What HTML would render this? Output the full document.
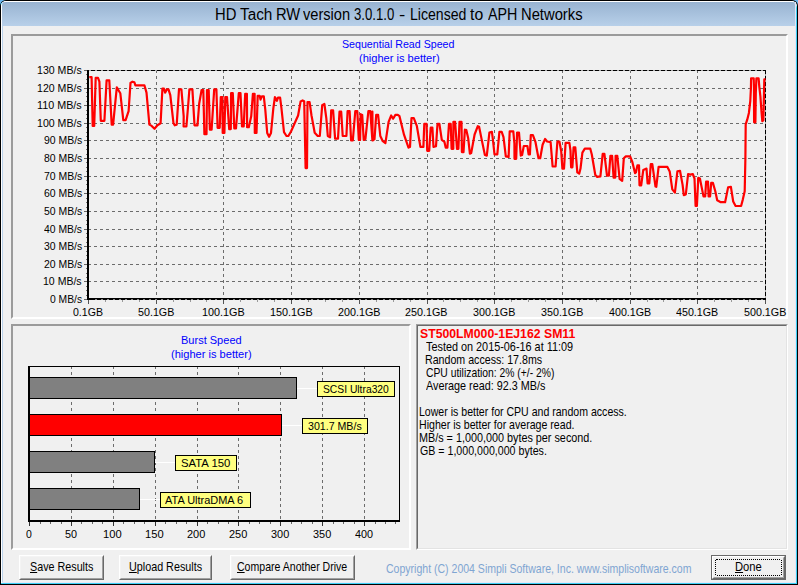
<!DOCTYPE html>
<html><head><meta charset="utf-8"><title>HD Tach RW version 3.0.1.0 - Licensed to APH Networks</title>
<style>
html,body{margin:0;padding:0;background:#6ab7ef;}
body{width:798px;height:585px;overflow:hidden;position:relative;font-family:"Liberation Sans",Arial,sans-serif;}
#win{position:absolute;left:0;top:0;width:798px;height:585px;background:#000;overflow:hidden;border-radius:6px 6px 0 0;}
#f1{position:absolute;left:1px;top:1px;width:796px;height:583px;background:#fff;border-radius:5px 5px 0 0;}
#f1b{position:absolute;left:1px;top:3px;width:796px;height:581px;background:#3dd0f5;border-radius:0 5px 0 0;}
#f1c{position:absolute;left:1px;top:1px;width:795px;height:582px;background:#fff;border-radius:5px 5px 0 0;}
#f2{position:absolute;left:2px;top:2px;width:794px;height:581px;background:#e4e6f6;}
#f2b{position:absolute;left:2px;top:2px;width:793px;height:580px;background:#b9d1ea;}
#title{position:absolute;left:2px;top:2px;width:793px;height:24px;background:linear-gradient(#98b3d1,#b8d0e9);border-radius:4px 4px 0 0;}
#client{position:absolute;left:3px;top:26px;width:792px;height:556px;background:#f0f0f0;}
.panel{position:absolute;box-sizing:border-box;border-style:solid;border-width:2px;border-color:#9b9b9b #fff #fff #9b9b9b;background:#f0f0f0;}
.sunk{position:absolute;box-sizing:border-box;border:1px solid;border-color:#a0a0a0 #fff #fff #a0a0a0;}
.sunk>div{position:absolute;left:0;top:0;right:0;bottom:0;border:1px solid;border-color:#696969 #e3e3e3 #e3e3e3 #696969;}
.btn{position:absolute;box-sizing:border-box;height:25px;top:555px;border:1px solid;border-color:#fff #696969 #696969 #fff;background:#f0f0f0;}
.btn>i{position:absolute;left:0;top:0;right:0;bottom:0;border:1px solid;border-color:#f4f4f4 #a0a0a0 #a0a0a0 #f4f4f4;}
.btn.def{border-color:#696969;}
.btn.def>i{border-color:#fff #696969 #696969 #fff;}
.btn.def>b{position:absolute;left:1px;top:1px;right:1px;bottom:1px;border:1px solid;border-color:#f0f0f0 #a0a0a0 #a0a0a0 #f0f0f0;}
.t{position:absolute;white-space:pre;line-height:20px;height:20px;transform-origin:0 50%;color:#000;font-weight:400;font-style:normal;font-family:"Liberation Sans",Arial,sans-serif;}
.t u{text-decoration:underline;text-underline-offset:1px;}
svg{position:absolute;left:0;top:0;overflow:visible;}
.g{stroke:#6c6c6c;stroke-width:1;stroke-dasharray:3 3;}
</style></head><body>
<div id="win">
<div id="f1"></div><div id="f1b"></div><div id="f1c"></div><div id="f2"></div><div id="f2b"></div>
<div id="title">
<span class="t" style="left:212.84px;top:2.66px;font-size:16px;transform:scaleX(0.9247)">HD</span>
<span class="t" style="left:237.86px;top:2.66px;font-size:16px;transform:scaleX(0.9587)">Tach</span>
<span class="t" style="left:273.85px;top:2.66px;font-size:16px;transform:scaleX(0.9182)">RW</span>
<span class="t" style="left:301.20px;top:2.66px;font-size:16px;transform:scaleX(0.9136)">version</span>
<span class="t" style="left:352.09px;top:2.66px;font-size:16px;transform:scaleX(0.8224)">3.0.1.0</span>
<span class="t" style="left:397.41px;top:2.66px;font-size:16px;transform:scaleX(1.1765)">-</span>
<span class="t" style="left:407.60px;top:2.66px;font-size:16px;transform:scaleX(0.8805)">Licensed</span>
<span class="t" style="left:468.20px;top:2.66px;font-size:16px;transform:scaleX(0.9846)">to</span>
<span class="t" style="left:486.10px;top:2.66px;font-size:16px;transform:scaleX(0.8926)">APH</span>
<span class="t" style="left:519.45px;top:2.66px;font-size:16px;transform:scaleX(0.9225)">Networks</span>
</div>
<div id="client"></div>
<div class="panel" id="seqpanel" style="left:11px;top:34px;width:777px;height:285px">
<svg width="798" height="585" viewBox="0 0 798 585" shape-rendering="crispEdges" style="left:-13px;top:-36px">
<line x1="88" y1="299.5" x2="765" y2="299.5" class="g"/>
<line x1="88" y1="281.5" x2="765" y2="281.5" class="g"/>
<line x1="88" y1="264.5" x2="765" y2="264.5" class="g"/>
<line x1="88" y1="246.5" x2="765" y2="246.5" class="g"/>
<line x1="88" y1="229.5" x2="765" y2="229.5" class="g"/>
<line x1="88" y1="211.5" x2="765" y2="211.5" class="g"/>
<line x1="88" y1="193.5" x2="765" y2="193.5" class="g"/>
<line x1="88" y1="176.5" x2="765" y2="176.5" class="g"/>
<line x1="88" y1="158.5" x2="765" y2="158.5" class="g"/>
<line x1="88" y1="140.5" x2="765" y2="140.5" class="g"/>
<line x1="88" y1="123.5" x2="765" y2="123.5" class="g"/>
<line x1="88" y1="105.5" x2="765" y2="105.5" class="g"/>
<line x1="88" y1="88.5" x2="765" y2="88.5" class="g"/>
<line x1="156.5" y1="70" x2="156.5" y2="298" class="g"/>
<line x1="223.5" y1="70" x2="223.5" y2="298" class="g"/>
<line x1="291.5" y1="70" x2="291.5" y2="298" class="g"/>
<line x1="359.5" y1="70" x2="359.5" y2="298" class="g"/>
<line x1="427.5" y1="70" x2="427.5" y2="298" class="g"/>
<line x1="494.5" y1="70" x2="494.5" y2="298" class="g"/>
<line x1="562.5" y1="70" x2="562.5" y2="298" class="g"/>
<line x1="630.5" y1="70" x2="630.5" y2="298" class="g"/>
<line x1="697.5" y1="70" x2="697.5" y2="298" class="g"/>
<line x1="89" y1="70.5" x2="766" y2="70.5" stroke="#000"/>
<line x1="765.5" y1="70" x2="765.5" y2="300" stroke="#000"/>
<line x1="88.5" y1="70.5" x2="766" y2="70.5" stroke="#a8a8a8" stroke-dasharray="2 4"/>
<line x1="765.5" y1="74" x2="765.5" y2="298" stroke="#a8a8a8" stroke-dasharray="2 4"/>
<polyline points="89.3,77.2 91.6,77.2 92.7,125.9 94.2,125.9 95.7,77.8 98.0,77.8 99.4,81.7 100.8,120.8 104.4,120.8 106.6,80.4 109.3,80.4 111.7,124.6 113.1,124.6 116.8,87.4 120.3,93.2 123.3,120.1 125.6,120.1 128.6,111.2 130.5,82.9 132.4,81.7 134.4,82.3 135.4,85.3 144.4,85.3 146.5,92.6 149.4,124.6 151.7,125.9 154.5,128.8 157.4,125.3 160.6,123.3 162.4,88.7 164.0,88.7 165.1,92.6 166.9,89.4 168.5,89.4 170.3,95.1 173.5,123.3 174.7,125.3 176.7,124.6 179.0,89.4 181.4,89.4 183.7,116.3 183.6,126.5 186.4,126.5 188.3,103.5 189.4,89.4 192.4,89.4 194.5,125.3 197.5,125.3 199.2,103.5 201.6,90.0 203.3,90.0 204.4,134.2 206.5,134.2 207.0,90.0 208.7,90.0 209.9,129.7 211.6,129.7 214.2,89.4 216.4,89.4 217.6,127.8 219.7,127.8 220.8,97.1 222.5,97.1 222.7,132.9 224.4,132.9 225.3,97.1 227.0,97.1 229.2,129.1 230.8,129.1 231.1,93.2 232.8,93.2 234.3,128.5 236.0,128.5 238.8,93.2 240.5,93.2 242.0,126.5 243.7,126.5 245.2,93.8 246.9,93.8 247.1,127.2 248.8,127.2 251.2,116.3 252.9,93.8 254.6,93.8 254.8,132.9 256.5,132.9 257.7,95.8 259.7,95.8 260.5,99.6 261.9,96.4 263.8,96.4 265.3,109.9 267.2,132.9 269.1,136.8 271.0,132.9 273.3,108.6 274.9,97.1 276.4,100.3 276.4,98.8 276.9,100.8 278.0,97.6 280.1,97.6 281.4,107.8 284.0,132.2 286.5,136.0 288.5,135.8 291.0,131.5 298.1,115.5 300.6,101.4 302.6,100.4 304.2,101.2 305.6,168.1 307.0,168.1 307.5,102.1 309.6,102.1 311.5,115.5 314.7,132.8 317.7,136.0 319.8,136.0 322.2,105.3 324.4,104.0 326.3,118.1 327.8,136.0 330.1,137.3 331.2,110.4 333.1,110.4 335.1,138.6 338.0,138.6 339.5,111.7 341.2,111.7 342.7,136.0 346.4,136.0 347.6,111.0 349.6,111.0 351.1,140.5 352.8,140.5 355.3,111.0 357.3,111.0 358.8,139.9 360.1,139.9 360.6,114.2 362.2,114.9 363.7,139.9 365.4,139.2 368.4,111.0 370.3,111.0 372.4,140.5 372.4,111.7 372.6,140.5 374.5,139.2 376.2,114.9 378.1,114.9 380.3,136.0 382.8,141.2 385.4,143.1 388.6,121.9 391.2,115.5 393.1,118.7 395.4,114.9 397.8,114.9 399.5,116.2 404.0,134.7 408.5,147.6 410.0,146.9 411.5,118.1 413.8,118.1 416.8,125.8 420.4,146.9 423.4,146.9 424.3,123.8 426.6,123.8 427.2,150.8 429.2,150.8 430.7,127.7 432.4,127.7 433.5,146.9 436.0,146.3 437.5,123.8 439.4,123.8 441.8,139.9 444.4,141.8 445.7,147.6 447.4,147.6 449.0,123.8 450.7,123.8 451.6,148.8 453.3,148.8 453.4,121.9 455.1,121.9 457.0,148.8 458.4,148.8 459.5,121.9 461.5,121.9 461.9,152.1 463.5,152.1 464.9,129.6 466.2,130.3 466.3,130.0 468.2,138.3 469.9,153.7 471.2,153.1 474.6,134.5 477.8,126.2 479.1,126.8 481.7,139.6 484.9,155.0 486.8,155.6 489.4,132.6 491.9,131.9 492.9,139.6 494.5,154.4 497.3,154.4 499.4,131.9 501.7,131.9 503.5,137.1 505.8,156.3 508.6,156.9 509.7,131.3 513.3,131.3 514.4,143.5 514.5,158.8 516.2,158.8 517.1,132.6 519.0,132.6 520.8,155.6 522.1,155.0 523.8,146.0 527.4,146.0 528.6,154.4 529.9,154.4 530.8,135.1 532.9,135.1 535.5,142.2 538.5,158.2 540.2,158.2 542.6,144.7 545.1,139.0 547.1,141.5 550.6,142.2 552.6,166.5 555.6,166.5 557.4,141.5 559.4,141.5 561.2,151.2 562.4,168.6 564.0,168.6 565.6,142.9 569.4,142.9 570.5,150.6 571.1,167.3 572.4,167.3 573.6,147.4 575.3,147.4 577.3,172.4 579.2,173.7 580.5,168.6 582.4,152.6 584.8,148.7 590.3,148.7 591.8,154.5 595.3,175.0 597.2,176.9 600.4,176.3 602.7,153.8 604.4,153.8 607.0,175.6 608.9,175.6 610.4,155.8 612.1,155.8 613.6,177.6 615.3,177.6 615.6,155.8 617.3,155.8 619.6,178.8 622.2,180.8 623.8,158.3 625.8,156.4 630.1,156.4 632.4,162.2 635.0,173.1 635.9,172.4 637.4,165.4 639.0,165.4 639.5,185.3 641.2,185.3 643.3,169.9 646.5,168.6 647.6,183.3 649.3,183.3 650.8,164.1 652.3,164.1 655.5,186.5 656.3,186.8 658.6,166.9 667.4,166.9 669.7,171.4 672.3,189.4 674.9,192.6 677.4,171.4 680.0,170.8 682.6,184.9 683.8,195.1 685.8,194.5 688.1,174.0 690.3,174.6 692.8,174.0 694.5,178.5 695.6,206.0 696.9,206.0 698.3,177.8 699.9,178.5 703.5,196.4 705.2,196.4 706.1,181.7 708.0,181.7 708.6,196.4 710.1,196.4 711.2,182.9 712.9,182.9 715.3,191.3 717.2,200.3 720.8,202.2 725.1,202.2 728.1,187.4 730.9,186.8 733.2,201.5 735.6,206.0 741.1,206.0 742.8,199.6 744.7,191.3 745.4,157.9 745.7,124.3 747.3,119.4 748.9,112.9 750.3,100.8 750.9,88.8 751.1,78.3 753.7,78.3 754.0,88.8 754.1,122.3 755.4,122.3 755.8,93.2 756.4,78.3 758.6,78.3 759.3,86.6 760.4,96.4 761.5,111.8 762.3,121.2 763.4,120.1 764.0,93.2 764.3,79.4 765.6,79.4" fill="none" stroke="#ff0000" stroke-width="2.2" stroke-linejoin="round" shape-rendering="geometricPrecision"/>
<rect x="87" y="70" width="2" height="230" fill="#000"/>
<rect x="87" y="298" width="679" height="2" fill="#000"/>
<line x1="94.5" y1="299.5" x2="765" y2="299.5" stroke="#8a8a8a" stroke-dasharray="2 4"/>
<line x1="84" y1="299.5" x2="87" y2="299.5" stroke="#666"/>
<line x1="84" y1="281.5" x2="87" y2="281.5" stroke="#666"/>
<line x1="84" y1="264.5" x2="87" y2="264.5" stroke="#666"/>
<line x1="84" y1="246.5" x2="87" y2="246.5" stroke="#666"/>
<line x1="84" y1="229.5" x2="87" y2="229.5" stroke="#666"/>
<line x1="84" y1="211.5" x2="87" y2="211.5" stroke="#666"/>
<line x1="84" y1="193.5" x2="87" y2="193.5" stroke="#666"/>
<line x1="84" y1="176.5" x2="87" y2="176.5" stroke="#666"/>
<line x1="84" y1="158.5" x2="87" y2="158.5" stroke="#666"/>
<line x1="84" y1="140.5" x2="87" y2="140.5" stroke="#666"/>
<line x1="84" y1="123.5" x2="87" y2="123.5" stroke="#666"/>
<line x1="84" y1="105.5" x2="87" y2="105.5" stroke="#666"/>
<line x1="84" y1="88.5" x2="87" y2="88.5" stroke="#666"/>
<line x1="84" y1="70.5" x2="87" y2="70.5" stroke="#666"/>
<line x1="86" y1="295.5" x2="87" y2="295.5" stroke="#777"/>
<line x1="86" y1="290.5" x2="87" y2="290.5" stroke="#777"/>
<line x1="86" y1="286.5" x2="87" y2="286.5" stroke="#777"/>
<line x1="86" y1="277.5" x2="87" y2="277.5" stroke="#777"/>
<line x1="86" y1="273.5" x2="87" y2="273.5" stroke="#777"/>
<line x1="86" y1="268.5" x2="87" y2="268.5" stroke="#777"/>
<line x1="86" y1="259.5" x2="87" y2="259.5" stroke="#777"/>
<line x1="86" y1="255.5" x2="87" y2="255.5" stroke="#777"/>
<line x1="86" y1="251.5" x2="87" y2="251.5" stroke="#777"/>
<line x1="86" y1="242.5" x2="87" y2="242.5" stroke="#777"/>
<line x1="86" y1="237.5" x2="87" y2="237.5" stroke="#777"/>
<line x1="86" y1="233.5" x2="87" y2="233.5" stroke="#777"/>
<line x1="86" y1="224.5" x2="87" y2="224.5" stroke="#777"/>
<line x1="86" y1="220.5" x2="87" y2="220.5" stroke="#777"/>
<line x1="86" y1="215.5" x2="87" y2="215.5" stroke="#777"/>
<line x1="86" y1="207.5" x2="87" y2="207.5" stroke="#777"/>
<line x1="86" y1="202.5" x2="87" y2="202.5" stroke="#777"/>
<line x1="86" y1="198.5" x2="87" y2="198.5" stroke="#777"/>
<line x1="86" y1="189.5" x2="87" y2="189.5" stroke="#777"/>
<line x1="86" y1="184.5" x2="87" y2="184.5" stroke="#777"/>
<line x1="86" y1="180.5" x2="87" y2="180.5" stroke="#777"/>
<line x1="86" y1="171.5" x2="87" y2="171.5" stroke="#777"/>
<line x1="86" y1="167.5" x2="87" y2="167.5" stroke="#777"/>
<line x1="86" y1="162.5" x2="87" y2="162.5" stroke="#777"/>
<line x1="86" y1="154.5" x2="87" y2="154.5" stroke="#777"/>
<line x1="86" y1="149.5" x2="87" y2="149.5" stroke="#777"/>
<line x1="86" y1="145.5" x2="87" y2="145.5" stroke="#777"/>
<line x1="86" y1="136.5" x2="87" y2="136.5" stroke="#777"/>
<line x1="86" y1="132.5" x2="87" y2="132.5" stroke="#777"/>
<line x1="86" y1="127.5" x2="87" y2="127.5" stroke="#777"/>
<line x1="86" y1="118.5" x2="87" y2="118.5" stroke="#777"/>
<line x1="86" y1="114.5" x2="87" y2="114.5" stroke="#777"/>
<line x1="86" y1="110.5" x2="87" y2="110.5" stroke="#777"/>
<line x1="86" y1="101.5" x2="87" y2="101.5" stroke="#777"/>
<line x1="86" y1="96.5" x2="87" y2="96.5" stroke="#777"/>
<line x1="86" y1="92.5" x2="87" y2="92.5" stroke="#777"/>
<line x1="86" y1="83.5" x2="87" y2="83.5" stroke="#777"/>
<line x1="86" y1="79.5" x2="87" y2="79.5" stroke="#777"/>
<line x1="86" y1="74.5" x2="87" y2="74.5" stroke="#777"/>
<line x1="88.5" y1="300" x2="88.5" y2="304" stroke="#555"/>
<line x1="105.5" y1="300" x2="105.5" y2="302" stroke="#999"/>
<line x1="122.5" y1="300" x2="122.5" y2="302" stroke="#999"/>
<line x1="139.5" y1="300" x2="139.5" y2="302" stroke="#999"/>
<line x1="156.5" y1="300" x2="156.5" y2="304" stroke="#555"/>
<line x1="173.5" y1="300" x2="173.5" y2="302" stroke="#999"/>
<line x1="190.5" y1="300" x2="190.5" y2="302" stroke="#999"/>
<line x1="206.5" y1="300" x2="206.5" y2="302" stroke="#999"/>
<line x1="223.5" y1="300" x2="223.5" y2="304" stroke="#555"/>
<line x1="240.5" y1="300" x2="240.5" y2="302" stroke="#999"/>
<line x1="257.5" y1="300" x2="257.5" y2="302" stroke="#999"/>
<line x1="274.5" y1="300" x2="274.5" y2="302" stroke="#999"/>
<line x1="291.5" y1="300" x2="291.5" y2="304" stroke="#555"/>
<line x1="308.5" y1="300" x2="308.5" y2="302" stroke="#999"/>
<line x1="325.5" y1="300" x2="325.5" y2="302" stroke="#999"/>
<line x1="342.5" y1="300" x2="342.5" y2="302" stroke="#999"/>
<line x1="359.5" y1="300" x2="359.5" y2="304" stroke="#555"/>
<line x1="376.5" y1="300" x2="376.5" y2="302" stroke="#999"/>
<line x1="393.5" y1="300" x2="393.5" y2="302" stroke="#999"/>
<line x1="410.5" y1="300" x2="410.5" y2="302" stroke="#999"/>
<line x1="427.5" y1="300" x2="427.5" y2="304" stroke="#555"/>
<line x1="443.5" y1="300" x2="443.5" y2="302" stroke="#999"/>
<line x1="460.5" y1="300" x2="460.5" y2="302" stroke="#999"/>
<line x1="477.5" y1="300" x2="477.5" y2="302" stroke="#999"/>
<line x1="494.5" y1="300" x2="494.5" y2="304" stroke="#555"/>
<line x1="511.5" y1="300" x2="511.5" y2="302" stroke="#999"/>
<line x1="528.5" y1="300" x2="528.5" y2="302" stroke="#999"/>
<line x1="545.5" y1="300" x2="545.5" y2="302" stroke="#999"/>
<line x1="562.5" y1="300" x2="562.5" y2="304" stroke="#555"/>
<line x1="579.5" y1="300" x2="579.5" y2="302" stroke="#999"/>
<line x1="596.5" y1="300" x2="596.5" y2="302" stroke="#999"/>
<line x1="613.5" y1="300" x2="613.5" y2="302" stroke="#999"/>
<line x1="630.5" y1="300" x2="630.5" y2="304" stroke="#555"/>
<line x1="647.5" y1="300" x2="647.5" y2="302" stroke="#999"/>
<line x1="663.5" y1="300" x2="663.5" y2="302" stroke="#999"/>
<line x1="680.5" y1="300" x2="680.5" y2="302" stroke="#999"/>
<line x1="697.5" y1="300" x2="697.5" y2="304" stroke="#555"/>
<line x1="714.5" y1="300" x2="714.5" y2="302" stroke="#999"/>
<line x1="731.5" y1="300" x2="731.5" y2="302" stroke="#999"/>
<line x1="748.5" y1="300" x2="748.5" y2="302" stroke="#999"/>
<line x1="765.5" y1="300" x2="765.5" y2="304" stroke="#555"/>
</svg>
<span class="t" style="left:328.84px;top:-2.02px;font-size:11.6px;transform:scaleX(0.9181);color:#0000ff">Sequential Read Speed</span>
<span class="t" style="left:346.13px;top:11.98px;font-size:11.6px;transform:scaleX(0.9549);color:#0000ff">(higher is better)</span>
<span class="t" style="left:36.70px;top:252.98px;font-size:11.6px;transform:scaleX(0.8909)">0 MB/s</span>
<span class="t" style="left:30.23px;top:234.98px;font-size:11.6px;transform:scaleX(0.9080)">10 MB/s</span>
<span class="t" style="left:30.50px;top:217.98px;font-size:11.6px;transform:scaleX(0.9015)">20 MB/s</span>
<span class="t" style="left:30.64px;top:199.98px;font-size:11.6px;transform:scaleX(0.8982)">30 MB/s</span>
<span class="t" style="left:30.78px;top:182.98px;font-size:11.6px;transform:scaleX(0.8950)">40 MB/s</span>
<span class="t" style="left:30.60px;top:164.98px;font-size:11.6px;transform:scaleX(0.8993)">50 MB/s</span>
<span class="t" style="left:30.50px;top:146.98px;font-size:11.6px;transform:scaleX(0.9015)">60 MB/s</span>
<span class="t" style="left:30.50px;top:129.98px;font-size:11.6px;transform:scaleX(0.9015)">70 MB/s</span>
<span class="t" style="left:30.55px;top:111.98px;font-size:11.6px;transform:scaleX(0.9004)">80 MB/s</span>
<span class="t" style="left:30.55px;top:93.98px;font-size:11.6px;transform:scaleX(0.9004)">90 MB/s</span>
<span class="t" style="left:24.12px;top:76.98px;font-size:11.6px;transform:scaleX(0.9131)">100 MB/s</span>
<span class="t" style="left:24.11px;top:58.98px;font-size:11.6px;transform:scaleX(0.9299)">110 MB/s</span>
<span class="t" style="left:24.12px;top:41.98px;font-size:11.6px;transform:scaleX(0.9131)">120 MB/s</span>
<span class="t" style="left:24.12px;top:23.98px;font-size:11.6px;transform:scaleX(0.9131)">130 MB/s</span>
<span class="t" style="left:60.09px;top:265.98px;font-size:11.6px;transform:scaleX(0.9106)">0.1GB</span>
<span class="t" style="left:124.58px;top:265.98px;font-size:11.6px;transform:scaleX(0.9243)">50.1GB</span>
<span class="t" style="left:188.91px;top:265.98px;font-size:11.6px;transform:scaleX(0.9335)">100.1GB</span>
<span class="t" style="left:256.61px;top:265.98px;font-size:11.6px;transform:scaleX(0.9335)">150.1GB</span>
<span class="t" style="left:324.59px;top:265.98px;font-size:11.6px;transform:scaleX(0.9272)">200.1GB</span>
<span class="t" style="left:392.29px;top:265.98px;font-size:11.6px;transform:scaleX(0.9272)">250.1GB</span>
<span class="t" style="left:460.13px;top:265.98px;font-size:11.6px;transform:scaleX(0.9241)">300.1GB</span>
<span class="t" style="left:527.83px;top:265.98px;font-size:11.6px;transform:scaleX(0.9241)">350.1GB</span>
<span class="t" style="left:595.67px;top:265.98px;font-size:11.6px;transform:scaleX(0.9210)">400.1GB</span>
<span class="t" style="left:663.37px;top:265.98px;font-size:11.6px;transform:scaleX(0.9210)">450.1GB</span>
<span class="t" style="left:730.88px;top:265.98px;font-size:11.6px;transform:scaleX(0.9251)">500.1GB</span>
</div>
<div class="panel" id="burstpanel" style="left:11px;top:324px;width:400px;height:226px">
<svg width="798" height="585" viewBox="0 0 798 585" shape-rendering="crispEdges" style="left:-13px;top:-326px">
<line x1="71.5" y1="366" x2="71.5" y2="520" class="g"/>
<line x1="113.5" y1="366" x2="113.5" y2="520" class="g"/>
<line x1="155.5" y1="366" x2="155.5" y2="520" class="g"/>
<line x1="197.5" y1="366" x2="197.5" y2="520" class="g"/>
<line x1="238.5" y1="366" x2="238.5" y2="520" class="g"/>
<line x1="280.5" y1="366" x2="280.5" y2="520" class="g"/>
<line x1="322.5" y1="366" x2="322.5" y2="520" class="g"/>
<line x1="364.5" y1="366" x2="364.5" y2="520" class="g"/>
<line x1="28" y1="366.5" x2="400" y2="366.5" stroke="#000"/>
<line x1="399.5" y1="366" x2="399.5" y2="521" stroke="#000"/>
<rect x="29.5" y="377.5" width="267" height="21" fill="#808080" stroke="#000"/>
<line x1="297" y1="388.5" x2="317" y2="388.5" stroke="#fff"/>
<rect x="317.5" y="381.5" width="77" height="15" fill="#ffff80" stroke="#000"/>
<rect x="29.5" y="414.5" width="252" height="21" fill="#ff0000" stroke="#000"/>
<line x1="282" y1="425.5" x2="302" y2="425.5" stroke="#fff"/>
<rect x="302.5" y="418.5" width="65" height="15" fill="#ffff80" stroke="#000"/>
<rect x="29.5" y="451.5" width="125" height="21" fill="#808080" stroke="#000"/>
<line x1="155" y1="462.5" x2="175" y2="462.5" stroke="#fff"/>
<rect x="175.5" y="455.5" width="61" height="15" fill="#ffff80" stroke="#000"/>
<rect x="29.5" y="488.5" width="110" height="21" fill="#808080" stroke="#000"/>
<line x1="140" y1="499.5" x2="160" y2="499.5" stroke="#fff"/>
<rect x="160.5" y="492.5" width="90" height="15" fill="#ffff80" stroke="#000"/>
<rect x="28" y="366" width="2" height="156" fill="#000"/>
<rect x="28" y="520" width="372" height="2" fill="#000"/>
<line x1="29.5" y1="522" x2="29.5" y2="526" stroke="#333"/>
<line x1="40.5" y1="522" x2="40.5" y2="524" stroke="#666"/>
<line x1="50.5" y1="522" x2="50.5" y2="524" stroke="#666"/>
<line x1="61.5" y1="522" x2="61.5" y2="524" stroke="#666"/>
<line x1="71.5" y1="522" x2="71.5" y2="526" stroke="#333"/>
<line x1="81.5" y1="522" x2="81.5" y2="524" stroke="#666"/>
<line x1="92.5" y1="522" x2="92.5" y2="524" stroke="#666"/>
<line x1="102.5" y1="522" x2="102.5" y2="524" stroke="#666"/>
<line x1="113.5" y1="522" x2="113.5" y2="526" stroke="#333"/>
<line x1="123.5" y1="522" x2="123.5" y2="524" stroke="#666"/>
<line x1="134.5" y1="522" x2="134.5" y2="524" stroke="#666"/>
<line x1="144.5" y1="522" x2="144.5" y2="524" stroke="#666"/>
<line x1="155.5" y1="522" x2="155.5" y2="526" stroke="#333"/>
<line x1="165.5" y1="522" x2="165.5" y2="524" stroke="#666"/>
<line x1="176.5" y1="522" x2="176.5" y2="524" stroke="#666"/>
<line x1="186.5" y1="522" x2="186.5" y2="524" stroke="#666"/>
<line x1="197.5" y1="522" x2="197.5" y2="526" stroke="#333"/>
<line x1="207.5" y1="522" x2="207.5" y2="524" stroke="#666"/>
<line x1="218.5" y1="522" x2="218.5" y2="524" stroke="#666"/>
<line x1="228.5" y1="522" x2="228.5" y2="524" stroke="#666"/>
<line x1="238.5" y1="522" x2="238.5" y2="526" stroke="#333"/>
<line x1="249.5" y1="522" x2="249.5" y2="524" stroke="#666"/>
<line x1="259.5" y1="522" x2="259.5" y2="524" stroke="#666"/>
<line x1="270.5" y1="522" x2="270.5" y2="524" stroke="#666"/>
<line x1="280.5" y1="522" x2="280.5" y2="526" stroke="#333"/>
<line x1="291.5" y1="522" x2="291.5" y2="524" stroke="#666"/>
<line x1="301.5" y1="522" x2="301.5" y2="524" stroke="#666"/>
<line x1="312.5" y1="522" x2="312.5" y2="524" stroke="#666"/>
<line x1="322.5" y1="522" x2="322.5" y2="526" stroke="#333"/>
<line x1="333.5" y1="522" x2="333.5" y2="524" stroke="#666"/>
<line x1="343.5" y1="522" x2="343.5" y2="524" stroke="#666"/>
<line x1="354.5" y1="522" x2="354.5" y2="524" stroke="#666"/>
<line x1="364.5" y1="522" x2="364.5" y2="526" stroke="#333"/>
<line x1="375.5" y1="522" x2="375.5" y2="524" stroke="#666"/>
<line x1="385.5" y1="522" x2="385.5" y2="524" stroke="#666"/>
<line x1="395.5" y1="522" x2="395.5" y2="524" stroke="#666"/>
</svg>
<span class="t" style="left:167.70px;top:3.98px;font-size:11.6px;transform:scaleX(0.9503);color:#0000ff">Burst Speed</span>
<span class="t" style="left:158.23px;top:17.98px;font-size:11.6px;transform:scaleX(0.9549);color:#0000ff">(higher is better)</span>
<span class="t" style="left:13.29px;top:197.98px;font-size:11.6px;transform:scaleX(0.9009)">0</span>
<span class="t" style="left:52.05px;top:197.98px;font-size:11.6px;transform:scaleX(0.9332)">50</span>
<span class="t" style="left:90.42px;top:197.98px;font-size:11.6px;transform:scaleX(0.9638)">100</span>
<span class="t" style="left:132.29px;top:197.98px;font-size:11.6px;transform:scaleX(0.9638)">150</span>
<span class="t" style="left:174.46px;top:197.98px;font-size:11.6px;transform:scaleX(0.9481)">200</span>
<span class="t" style="left:216.33px;top:197.98px;font-size:11.6px;transform:scaleX(0.9481)">250</span>
<span class="t" style="left:258.34px;top:197.98px;font-size:11.6px;transform:scaleX(0.9404)">300</span>
<span class="t" style="left:300.21px;top:197.98px;font-size:11.6px;transform:scaleX(0.9404)">350</span>
<span class="t" style="left:342.23px;top:197.98px;font-size:11.6px;transform:scaleX(0.9328)">400</span>
<span class="t" style="left:310.16px;top:52.98px;font-size:11.6px;transform:scaleX(0.8881)">SCSI Ultra320</span>
<span class="t" style="left:295.33px;top:89.98px;font-size:11.6px;transform:scaleX(0.9158)">301.7 MB/s</span>
<span class="t" style="left:167.91px;top:126.98px;font-size:11.6px;transform:scaleX(0.9761)">SATA 150</span>
<span class="t" style="left:151.90px;top:163.98px;font-size:11.6px;transform:scaleX(0.9461)">ATA UltraDMA 6</span>
</div>
<div class="sunk" id="infopanel" style="left:416px;top:324px;width:372px;height:226px"><div></div>
<span class="t" style="left:2.81px;top:-1.50px;font-size:13.0px;transform:scaleX(0.9425);color:#ff0000;font-weight:700">ST500LM000-1EJ162 SM11</span>
<span class="t" style="left:9.03px;top:11.50px;font-size:13.0px;transform:scaleX(0.8347)">Tested on 2015-06-16 at 11:09</span>
<span class="t" style="left:8.37px;top:24.50px;font-size:13.0px;transform:scaleX(0.8183)">Random access: 17.8ms</span>
<span class="t" style="left:8.72px;top:37.50px;font-size:13.0px;transform:scaleX(0.7953)">CPU utilization: 2% (+/- 2%)</span>
<span class="t" style="left:9.20px;top:50.50px;font-size:13.0px;transform:scaleX(0.8312)">Average read: 92.3 MB/s</span>
<span class="t" style="left:2.17px;top:76.50px;font-size:13.0px;transform:scaleX(0.8123)">Lower is better for CPU and random access.</span>
<span class="t" style="left:2.17px;top:89.50px;font-size:13.0px;transform:scaleX(0.8151)">Higher is better for average read.</span>
<span class="t" style="left:2.16px;top:102.50px;font-size:13.0px;transform:scaleX(0.8313)">MB/s = 1,000,000 bytes per second.</span>
<span class="t" style="left:2.50px;top:115.50px;font-size:13.0px;transform:scaleX(0.8183)">GB = 1,000,000,000 bytes.</span>
</div>
<div class="btn" style="left:19px;width:85px"><i></i>
<span class="t" style="left:9.66px;top:0.50px;font-size:13.0px;transform:scaleX(0.8274)"><u>S</u>ave Results</span>
</div>
<div class="btn" style="left:119px;width:93px"><i></i>
<span class="t" style="left:8.53px;top:0.50px;font-size:13.0px;transform:scaleX(0.8282)"><u>U</u>pload Results</span>
</div>
<div class="btn" style="left:230px;width:125px"><i></i>
<span class="t" style="left:6.11px;top:0.50px;font-size:13.0px;transform:scaleX(0.8115)"><u>C</u>ompare Another Drive</span>
</div>
<span class="t" style="left:385.51px;top:558.50px;font-size:13.0px;transform:scaleX(0.8099);color:#7fa5d2">Copyright (C) 2004 Simpli Software, Inc. www.simplisoftware.com</span>
<div class="btn def" style="left:711px;width:75px"><i></i><b></b>
<svg width="75" height="25" viewBox="0 0 75 25" shape-rendering="crispEdges" style="left:-1px;top:-1px"><rect x="4.5" y="4.5" width="66" height="16" rx="1.5" fill="none" stroke="#000" stroke-dasharray="1 1"/></svg>
<span class="t" style="left:22.73px;top:0.50px;font-size:13.0px;transform:scaleX(0.8600)"><u>D</u>one</span>
</div>
</div>
</body></html>
